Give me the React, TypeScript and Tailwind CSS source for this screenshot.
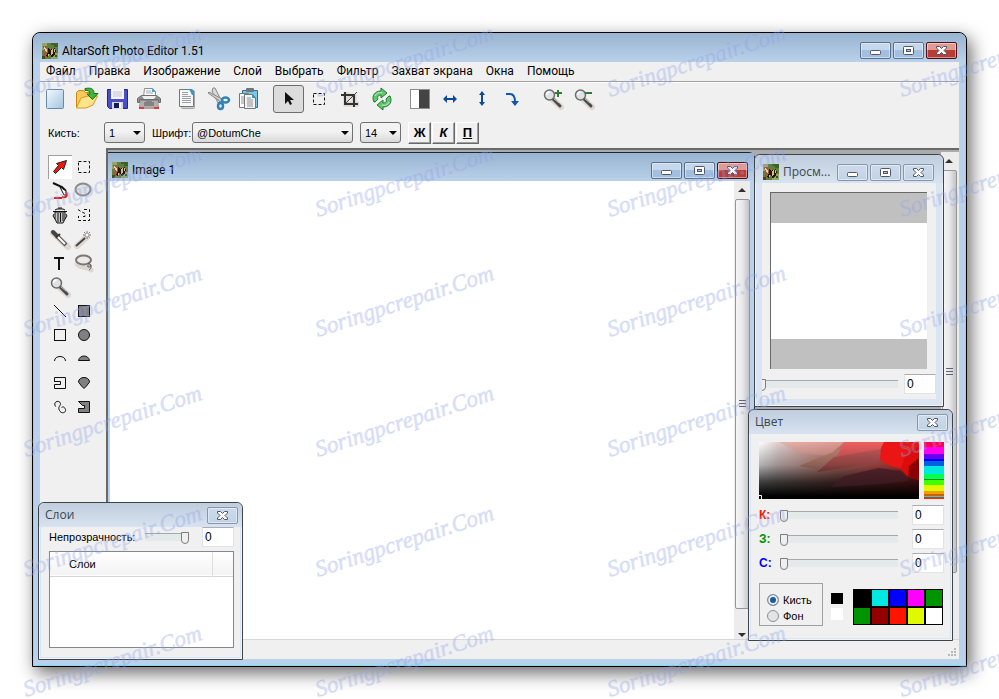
import { useState } from 'react';
import type { ReactNode } from 'react';

type IconProps = { children: ReactNode; size?: number };

function Icon({ children, size = 24 }: IconProps) {
  return (
    <svg width={size} height={size} viewBox={`0 0 ${size} ${size}`} fill="none" aria-hidden="true">
      {children}
    </svg>
  );
}

function Butterfly() {
  return (
    <svg width="16" height="16" viewBox="0 0 16 16" className="shrink-0" shapeRendering="crispEdges" aria-hidden="true">
      <rect width="16" height="16" fill="#5f7f3a" />
      <path d="M0 0h5v3H3v4H0zM11 10h5v6h-7v-3h2z" fill="#8fa868" />
      <path d="M9 0h7v4h-4V2H9z" fill="#3f6326" />
      <path d="M1 3h2l4 4v5l-3 3-2-3 1-3z" fill="#a4583a" />
      <path d="M2 4l3 2v3l-2-1z" fill="#e6cfb5" />
      <path d="M6 5l2 2 5-2 1 3-2 5-3 1-1-4-2 4-2-1 2-4z" fill="#23150f" />
      <path d="M9 7l2-1v4l-2 2zM12 6h1v3h-1zM6 11h1v2H6z" fill="#dcb98c" />
      <path d="M0 13h3v3H0zM13 12h2v2h-2z" fill="#394f20" />
    </svg>
  );
}

type CaptionKind = 'minimize' | 'maximize' | 'close';
type Tone = 'active' | 'danger' | 'idle';

const captionTones: Record<Tone, string> = {
  active: 'border-[#5b6f8c] bg-linear-to-b from-[#c3d7ed] from-45% to-[#a2bfdf] to-50%',
  danger: 'border-[#4d1018] bg-linear-to-b from-[#df9a92] from-45% to-[#b93d34] to-50%',
  idle: 'border-[#8796ab] bg-linear-to-b from-[#ccdbec] to-[#c2d3e6]',
};

function CaptionButton({ kind, tone, label }: { kind: CaptionKind; tone: Tone; label: string }) {
  return (
    <button
      type="button"
      aria-label={label}
      className={`flex h-[17px] w-[31px] items-center justify-center rounded-[2px] border shadow-[inset_0_0_0_1px_rgba(255,255,255,0.45)] ${captionTones[tone]}`}
    >
      <svg width="13" height="11" viewBox="0 0 13 11" aria-hidden="true">
        {kind === 'minimize' && <rect x="1.500" y="5.500" width="10" height="4" rx="1" fill="#fff" stroke="#535666" />}
        {kind === 'maximize' && (
          <>
            <rect x="1.500" y="1.500" width="10" height="8" rx="1" fill="#fff" stroke="#535666" />
            <rect x="4.500" y="4.500" width="4" height="2" fill="#a9c1de" stroke="#535666" />
          </>
        )}
        {kind === 'close' && (
          <path
            d="M1.500 1.500h3l2 2 2-2h3v1.500L9 5.500 11.500 8v1.500h-3l-2-2-2 2h-3V8L4 5.500 1.500 3z"
            fill="#fff"
            stroke="#535666"
          />
        )}
      </svg>
    </button>
  );
}

function WindowButtons({ tone }: { tone: 'active' | 'idle' }) {
  return (
    <div className="flex gap-0.5">
      <CaptionButton kind="minimize" tone={tone} label="Свернуть" />
      <CaptionButton kind="maximize" tone={tone} label="Развернуть" />
      <CaptionButton kind="close" tone={tone === 'active' ? 'danger' : 'idle'} label="Закрыть" />
    </div>
  );
}

function ScrollBar({ label }: { label: string }) {
  return (
    <div role="scrollbar" aria-label={label} aria-orientation="vertical" aria-valuenow={0} aria-controls="canvas" className="flex w-4 shrink-0 flex-col items-center bg-[#ececec]">
      <svg width="16" height="18" viewBox="0 0 16 18" aria-hidden="true">
        <path d="M4 11l4-4 4 4z" fill="#303030" />
      </svg>
      <div className="flex w-[15px] flex-1 items-center justify-center rounded-[2px] border border-[#979797] bg-linear-to-r from-[#f6f6f6] via-[#e8e8ea] to-[#c2c3c7]">
        <svg width="9" height="8" viewBox="0 0 9 8" shapeRendering="crispEdges" aria-hidden="true">
          <path d="M1 0h7v1H1zM1 3h7v1H1zM1 6h7v1H1z" fill="#5f6570" />
        </svg>
      </div>
      <svg width="16" height="30" viewBox="0 0 16 30" aria-hidden="true">
        <path d="M4 24l4 4 4-4z" fill="#303030" />
      </svg>
    </div>
  );
}

const menuItems = ['Файл', 'Правка', 'Изображение', 'Слой', 'Выбрать', 'Фильтр', 'Захват экрана', 'Окна', 'Помощь'];

const lens = (
  <>
    <path d="M12 13l8 7" stroke="#c9beb4" strokeWidth="6" strokeLinecap="round" opacity="0.5" />
    <path d="M12 12l7 7" stroke="#4c4a48" strokeWidth="3" strokeLinecap="round" />
    <path d="M13 12l5 4" stroke="#bdbdbd" strokeWidth="1" />
    <circle cx="8.500" cy="8" r="5" fill="#dfe2e4" stroke="#6c6c6c" strokeWidth="1.500" />
    <path d="M5.500 8a3 3 0 013-3" stroke="#fff" strokeWidth="1.500" />
  </>
);

const toolbarGroups: { name: string; art: ReactNode }[][] = [
  [
    {
      name: 'Создать',
      art: (
        <>
          <defs>
            <linearGradient id="sheet" x1="0" y1="0" x2="1" y2="1">
              <stop offset="0" stopColor="#f4f9fd" />
              <stop offset="1" stopColor="#a3c3e0" />
            </linearGradient>
          </defs>
          <rect x="2.500" y="2.500" width="17" height="19" rx="1" fill="url(#sheet)" stroke="#6589a9" />
        </>
      ),
    },
    {
      name: 'Открыть',
      art: (
        <>
          <path d="M1.500 20V5.500l2-2h5l2 2h7V10" fill="#f6c95a" stroke="#c98a12" />
          <path d="M1.500 21L6 11l7-2h9.500L18 18l-7 3z" fill="#ffe38a" stroke="#d79a1c" />
          <path d="M10 1.500c6-1 9 0 9 5h4l-5.500 6L12 7h3c0-3-2-4-5-3.500z" fill="#42b53a" stroke="#16741a" />
        </>
      ),
    },
    {
      name: 'Сохранить',
      art: (
        <>
          <path d="M1.500 2.500h20v19h-18l-2-2z" fill="#4a4fc4" stroke="#22278a" />
          <rect x="5" y="2" width="13" height="10" fill="#f4f4f6" />
          <path d="M7 5h9M7 7h9M7 9h9" stroke="#c4c4cc" />
          <rect x="6" y="15" width="11" height="7" fill="#d6d6ea" />
          <rect x="8" y="16" width="5" height="5" fill="#15195c" />
          <rect x="13" y="16" width="2" height="5" fill="#fff" />
        </>
      ),
    },
    {
      name: 'Печать',
      art: (
        <>
          <path d="M6.500 10.500l1-9h8l3 3v6" fill="#fff" stroke="#8c8c8c" />
          <path d="M9 4h5M9 6h7" stroke="#9aa5ad" />
          <path d="M15 1l4 4h-4z" fill="#45a9d8" />
          <path d="M.5 11.500l4-3h15l4 3v4h-2v-3h-19v3h-2z" fill="#8f8f8f" stroke="#6d6d6d" />
          <path d="M5 9h14l-2 3H7z" fill="#efefef" />
          <path d="M3.500 13.500h17l1 7h-19z" fill="#d6d6d6" stroke="#8a8a8a" />
          <path d="M4 15h16M4 17h16M3 19h18" stroke="#8a8a8a" />
          <path d="M8 19V15M10 19V14M12 19V14M14 19V14M16 19V15" stroke="#555" />
          <path d="M2 21h5M17 21h5" stroke="#e03a3a" strokeWidth="2" />
          <path d="M7 21h10" stroke="#b0a0a0" strokeWidth="2" />
        </>
      ),
    },
  ],
  [
    {
      name: 'Копировать',
      art: (
        <>
          <rect x="5.500" y="3.500" width="13" height="18" rx="1" fill="#cfcfcf" stroke="#a5a5a5" />
          <path d="M3.500 2.500H14l3.500 3v14h-14z" fill="#f7f7f7" stroke="#777" />
          <path d="M6 5.500h6M6 7.500h6M6 9.500h9M6 11.500h9M6 13.500h9M6 15.500h9" stroke="#9aa0a5" />
          <path d="M13 2h3l2 2v4h-2z" fill="#3697c8" />
        </>
      ),
    },
    {
      name: 'Вырезать',
      art: (
        <>
          <path d="M6 1h2l6 12-3 3L5 4z" fill="#d9d9d9" stroke="#888" />
          <path d="M1 6l1-1 13 7-1 3z" fill="#cdcdcd" stroke="#888" />
          <ellipse cx="18.500" cy="13" rx="3.500" ry="2.500" stroke="#2c83b8" strokeWidth="2.500" />
          <ellipse cx="13.500" cy="19" rx="2.500" ry="3" stroke="#2c83b8" strokeWidth="2.500" />
        </>
      ),
    },
    {
      name: 'Вставить',
      art: (
        <>
          <path d="M4.500 3.500h15v17h-15z" fill="#7cc5e4" stroke="#2b6f94" />
          <rect x="8" y="1" width="8" height="4" rx="1" fill="#69797f" />
          <path d="M1.500 6.500h9l2 2v12h-11z" fill="#fff" stroke="#777" />
          <path d="M6.500 7.500h8l3 3v11h-11z" fill="#f4f4f4" stroke="#777" />
          <path d="M14 7l4 4h-4z" fill="#3697c8" />
          <path d="M3 10h3M3 12h3M3 14h3M3 16h3M9 11h4M9 13h6M9 15h6M9 17h6M9 19h6" stroke="#8a9299" />
        </>
      ),
    },
  ],
  [
    { name: 'Указатель', art: <path d="M8 5v12l3-3 2 4 2-1-2-4h4z" fill="#111" /> },
    { name: 'Выделение', art: <rect x="5.500" y="6.500" width="11" height="11" stroke="#111" strokeDasharray="3 2" /> },
    {
      name: 'Кадрировать',
      art: (
        <>
          <path d="M7 5v12h13M4 9h11v11" stroke="#c3bdb8" strokeWidth="5" opacity="0.5" />
          <path d="M6 5v12h13M2 8h13v12" stroke="#333" strokeWidth="2" />
          <path d="M7 16L18 5" stroke="#444" />
        </>
      ),
    },
    {
      name: 'Обновить',
      art: (
        <>
          <path d="M4 15C1 9 5 4 11 4V1l6 5-6 5V8c-3 0-4 2-3 4l-3 3z" fill="#62c96b" stroke="#23763a" />
          <path d="M20 9c3 6-1 11-7 11v3l-6-5 6-5v3c3 0 4-2 3-4l3-3z" fill="#62c96b" stroke="#23763a" />
          <path d="M5 9c1-3 4-4 7-3M19 15c-1 3-4 4-7 3" stroke="#c5efc6" />
        </>
      ),
    },
  ],
  [
    {
      name: 'Контраст',
      art: (
        <>
          <rect x="1.500" y="2.500" width="19" height="19" fill="#fff" stroke="#8d8d8d" />
          <path d="M10 3h10v18H10z" fill="#444" />
        </>
      ),
    },
    {
      name: 'Отразить по горизонтали',
      art: (
        <>
          <path d="M5 12h10" stroke="#0a4a96" strokeWidth="2" />
          <path d="M3 12l4-4v8zM17 12l-4-4v8z" fill="#0a4a96" />
        </>
      ),
    },
    {
      name: 'Отразить по вертикали',
      art: (
        <>
          <path d="M11 7v9" stroke="#0a4a96" strokeWidth="2" />
          <path d="M11 4l3 4H8zM11 19l3-4H8z" fill="#0a4a96" />
        </>
      ),
    },
    {
      name: 'Повернуть',
      art: (
        <>
          <path d="M4 7h4c4 0 5 3 5 8" stroke="#0d55b0" strokeWidth="2" />
          <path d="M9 14h8l-4 5z" fill="#0d55b0" />
        </>
      ),
    },
  ],
  [
    {
      name: 'Увеличить',
      art: (
        <>
          {lens}
          <path d="M17 3v7M14 6h7" stroke="#2f7d32" strokeWidth="2" />
        </>
      ),
    },
    {
      name: 'Уменьшить',
      art: (
        <>
          {lens}
          <path d="M13 6h7" stroke="#2f7d32" strokeWidth="2" />
        </>
      ),
    },
  ],
];

const tools: ({ name: string; art: ReactNode } | null)[] = [
  { name: 'Перемещение', art: <path d="M18.500 5.500l-3 9-2-2-6 6-2-2 5-6-2-2z" fill="#f01808" stroke="#222" /> },
  { name: 'Прямоугольное выделение', art: <rect x="6.500" y="6.500" width="11" height="11" stroke="#111" strokeDasharray="3 2" /> },
  {
    name: 'Кисть',
    art: (
      <>
        <path d="M5 4l9 4 4 4" stroke="#111" strokeWidth="2" />
        <path d="M12 8l6 4v4h-2z" fill="#fff" stroke="#111" />
        <path d="M18 13c2 4 0 6-4 5M6 19h8" stroke="#e21a12" strokeWidth="2" />
      </>
    ),
  },
  { name: 'Овальное выделение', art: <ellipse cx="11" cy="10.500" rx="7.500" ry="6" fill="#e2e2e2" stroke="#8a8a8a" strokeWidth="2" /> },
  {
    name: 'Корзина',
    art: (
      <>
        <path d="M7 9h10v7l-2 4H9l-2-4z" fill="#c8c8c8" stroke="#111" />
        <path d="M5 8.500h14M7 7l2-1h6l2 1M10 5h4M6 11l-1 2 2 3M18 11l1 2-2 3M10 10v9M12.500 10v9M15 10v8" stroke="#111" />
      </>
    ),
  },
  {
    name: 'Выделение многоугольником',
    art: <path d="M12 6.500h5.500v11h-11V13M6 6.500l3 2 4 2v3H9" stroke="#111" strokeDasharray="3 2" />,
  },
  {
    name: 'Пипетка',
    art: (
      <>
        <path d="M5 6l15 14" stroke="#c9beb4" strokeWidth="6" strokeLinecap="round" opacity="0.5" />
        <path d="M5 5l4 4" stroke="#444" strokeWidth="4" strokeLinecap="round" />
        <path d="M12 7l-4 4" stroke="#333" strokeWidth="2" />
        <path d="M10 10l8 8" stroke="#555" strokeWidth="4" />
        <path d="M10 10l7 7" stroke="#fff" strokeWidth="2" />
      </>
    ),
  },
  {
    name: 'Волшебная палочка',
    art: (
      <>
        <path d="M5 19l10-9" stroke="#c9beb4" strokeWidth="6" strokeLinecap="round" opacity="0.5" />
        <path d="M4 19l9-8" stroke="#444" strokeWidth="2" />
        <path d="M15 4v9M11 8h9M12 5l6 6M18 5l-6 6" stroke="#7c7c7c" strokeDasharray="2 1" />
        <circle cx="15" cy="8" r="2" fill="#fff" stroke="#999" />
      </>
    ),
  },
  { name: 'Текст', art: <path d="M6 7h10M11 7v12" stroke="#111" strokeWidth="2" /> },
  {
    name: 'Лассо',
    art: (
      <>
        <path d="M5 13c5 5 11 2 14 6" stroke="#c9beb4" strokeWidth="5" strokeLinecap="round" opacity="0.5" />
        <ellipse cx="11.500" cy="9" rx="7.500" ry="4.500" fill="#eceae8" stroke="#777" strokeWidth="2" />
        <path d="M16 12c4 1 4 4 1 4s-1-3 1-2 1 4-1 5" stroke="#555" />
      </>
    ),
  },
  { name: 'Масштаб', art: lens },
  null,
  { name: 'Линия', art: <path d="M6 6l12 12" stroke="#111" /> },
  { name: 'Закрашенный прямоугольник', art: <rect x="6.500" y="6.500" width="11" height="11" fill="#808080" stroke="#111" /> },
  { name: 'Прямоугольник', art: <rect x="6.500" y="6.500" width="11" height="11" stroke="#111" /> },
  { name: 'Закрашенный круг', art: <circle cx="12" cy="12" r="5.500" fill="#808080" stroke="#111" /> },
  { name: 'Дуга', art: <path d="M6.500 14c0-6 11-6 11 0" stroke="#111" /> },
  { name: 'Сегмент', art: <path d="M6.500 13.500c1-6 10-6 11 0z" fill="#808080" stroke="#111" /> },
  { name: 'Ломаная', art: <path d="M6.500 11V6.500h11v11h-11v-4h6v-3h-6" stroke="#111" /> },
  { name: 'Сектор', art: <path d="M6.500 11c0-6 11-6 11 0l-3 4-2.500 2.500-2.500-2.500z" fill="#808080" stroke="#111" /> },
  { name: 'Кривая', art: <path d="M7.500 11.500c-3-5 4-7 5-3 0 3-3 3-1 7s7 2 6-1-3-3-4-2" stroke="#111" /> },
  { name: 'Многоугольник', art: <path d="M6.500 6.500h11v11h-11v-4h6v-3h-2z" fill="#808080" stroke="#111" /> },
];

function DropDown({ id, label, options, width }: { id: string; label?: string; options: string[]; width: string }) {
  return (
    <div className={`grid shrink-0 items-center ${width}`}>
      <select
        id={id}
        aria-label={label}
        className="col-start-1 row-start-1 h-[21px] appearance-none rounded-[3px] border border-[#707070] bg-linear-to-b from-[#f2f2f2] from-45% to-[#d9d9d9] pl-1 text-[11px] leading-4"
      >
        {options.map((option) => (
          <option key={option}>{option}</option>
        ))}
      </select>
      <svg width="8" height="4" viewBox="0 0 8 4" className="pointer-events-none col-start-1 row-start-1 mr-1 justify-self-end" aria-hidden="true">
        <path d="M0 0h8L4 4z" fill="#000" />
      </svg>
    </div>
  );
}

function Range({ label, value, className }: { label: string; value: number; className: string }) {
  return (
    <input
      type="range"
      aria-label={label}
      defaultValue={value}
      className={`h-3 appearance-none bg-transparent [&::-webkit-slider-runnable-track]:h-2 [&::-webkit-slider-runnable-track]:border-t [&::-webkit-slider-runnable-track]:border-[#a5a9a9] [&::-webkit-slider-runnable-track]:bg-[#e4e9e9] [&::-webkit-slider-thumb]:-mt-0.5 [&::-webkit-slider-thumb]:h-3 [&::-webkit-slider-thumb]:w-2 [&::-webkit-slider-thumb]:appearance-none [&::-webkit-slider-thumb]:rounded-b-sm [&::-webkit-slider-thumb]:border [&::-webkit-slider-thumb]:border-[#7d7d7d] [&::-webkit-slider-thumb]:bg-[#efefef] ${className}`}
    />
  );
}

function NumberBox({ label }: { label: string }) {
  return (
    <input
      type="text"
      aria-label={label}
      defaultValue="0"
      className="h-5 w-8 shrink-0 border border-[#e2e3ea] border-t-[#abadb3] bg-white px-0.5 text-[12px] leading-4"
    />
  );
}

const panelClass =
  'absolute flex flex-col rounded-t-md border border-[#3f444b] bg-[#d9e5f2] font-["Liberation_Sans",sans-serif] text-[11px] leading-4 shadow-[inset_0_0_0_1px_rgba(255,255,255,0.6)]';
const panelTitle = 'flex items-center justify-between rounded-t-md bg-linear-to-b from-[#bfcddd] to-[#d7e3f0] font-["Open_Sans",sans-serif] text-[12px] text-[#3c4650]';

function PreviewPanel() {
  return (
    <section className={`${panelClass} top-[121px] right-[22px] h-[253px] w-[190px]`}>
      <header className={`${panelTitle} h-7 shrink-0 pt-1.5 pr-[9px] pl-2`}>
        <div className="flex items-center gap-1">
          <Butterfly />
          <h2>Просм...</h2>
        </div>
        <WindowButtons tone="idle" />
      </header>
      <div className="mx-[7px] mb-[7px] flex flex-1 flex-col overflow-hidden bg-[#f0f0f0]">
        <div className="mt-[9px] mr-[9px] ml-2 flex h-[177px] flex-col justify-center border-t border-l border-[#696969] bg-[#c0c0c0]">
          <div className="h-[116px] bg-white" />
        </div>
        <div className="mt-[5px] flex items-center justify-between">
          <Range label="Масштаб просмотра" value={0} className="-ml-1 w-[140px]" />
          <NumberBox label="Масштаб" />
        </div>
      </div>
    </section>
  );
}

function ColorField() {
  return (
    <svg viewBox="0 0 160 57" preserveAspectRatio="none" className="h-[57px] flex-1" aria-hidden="true">
      <defs>
        <linearGradient id="grayFade" x1="0" x2="1">
          <stop offset="0" stopColor="#ffffff" />
          <stop offset="0.12" stopColor="#e0d0d0" />
          <stop offset="0.3" stopColor="#d8a49c" />
          <stop offset="0.5" stopColor="#c87870" />
          <stop offset="1" stopColor="#d83030" />
        </linearGradient>
        <linearGradient id="blackFade" x1="0" x2="0" y1="0" y2="1">
          <stop offset="0" stopColor="#000" stopOpacity="0" />
          <stop offset="0.4" stopColor="#000" stopOpacity="0.3" />
          <stop offset="0.7" stopColor="#000" stopOpacity="0.75" />
          <stop offset="0.95" stopColor="#000" />
        </linearGradient>
      </defs>
      <rect width="160" height="57" fill="url(#grayFade)" />
      <path d="M20 0h65L70 14 40 11z" fill="#e9aaa2" opacity="0.7" />
      <path d="M40 24L84 6 80 16 58 27z" fill="#c98a7a" />
      <path d="M86 0h41l-6 9-43 5z" fill="#ee6060" />
      <path d="M75 15l47-8-2 14-62 9z" fill="#c85c5c" />
      <rect width="160" height="57" fill="url(#blackFade)" />
      <path d="M85 34l35-8 22 3 8 10-28 3-50 3z" fill="#401c24" opacity="0.8" />
      <path d="M125 0h35v12l-14 16-14-4-11-6 1-12z" fill="#ea1515" />
      <path d="M146 14l14-10v34l-12-4-6-7z" fill="#dc0c0c" />
      <path d="M160 16v22l-11-4 1-10z" fill="#8d0000" />
      <path d="M0 55h160v2H0z" fill="#000" />
      <path d="M0 53.500h2.500V57" stroke="#fff" fill="none" />
    </svg>
  );
}

const hueStops: [string, string][] = [
  ['bg-[#ff0050]', 'h-[5px]'],
  ['bg-[#ff00f0]', 'h-[7px]'],
  ['bg-[#6a00f0]', 'h-[5px]'],
  ['bg-[#0000ff]', 'h-[2px]'],
  ['bg-[#0060e0]', 'h-[5px]'],
  ['bg-[#00e8e0]', 'h-[8px]'],
  ['bg-[#00ff50]', 'h-[5px]'],
  ['bg-[#0a9010]', 'h-[1px]'],
  ['bg-[#40ff00]', 'h-[5px]'],
  ['bg-[#e0f800]', 'h-[6px]'],
  ['bg-[#f0a000]', 'h-[3px]'],
  ['bg-[#c86400]', 'h-[2px]'],
  ['bg-[#00e8e0]', 'h-[1px]'],
  ['bg-[#ff2800]', 'h-[2px]'],
];

const channels = [
  { name: 'К', color: 'text-[#ff1400]' },
  { name: 'З', color: 'text-[#009400]' },
  { name: 'С', color: 'text-[#0000ff]' },
];

const swatches = [
  'bg-black',
  'bg-[#00e8e4]',
  'bg-[#0000ff]',
  'bg-[#ff00ff]',
  'bg-[#009400]',
  'bg-[#009400]',
  'bg-[#940000]',
  'bg-[#ff1400]',
  'bg-[#e0f800]',
  'bg-white',
];

function ColorPanel() {
  const [target, setTarget] = useState('Кисть');
  return (
    <section className={`${panelClass} top-[376px] right-[13px] h-[232px] w-[205px]`}>
      <header className={`${panelTitle} h-6 shrink-0 pr-1 pl-1.5`}>
        <h2>Цвет</h2>
        <CaptionButton kind="close" tone="idle" label="Закрыть палитру" />
      </header>
      <div className="mx-0.5 mb-0.5 flex flex-1 flex-col bg-[#f0f0f0] pt-2 pr-1.5 pl-2">
        <div className="flex gap-[5px]">
          <ColorField />
          <div className="w-5">
            {hueStops.map(([color, height], i) => (
              <div key={i} className={`${color} ${height}`} />
            ))}
          </div>
        </div>
        <div className="mt-1.5 flex flex-col gap-1">
          {channels.map(({ name, color }) => (
            <div key={name} className="flex items-center">
              <span className={`w-[21px] text-[12px] font-bold ${color}`}>{name}:</span>
              <Range label={name} value={0} className="mr-3.5 min-w-0 flex-1" />
              <NumberBox label={`Значение ${name}`} />
            </div>
          ))}
        </div>
        <div className="mt-2.5 flex items-center">
          <fieldset className="h-[43px] w-16 border border-[#a0a0a0] pt-2 pl-[7px]">
            {['Кисть', 'Фон'].map((name) => (
              <label key={name} className="flex h-4 items-center gap-1">
                <input
                  type="radio"
                  name="target"
                  checked={target === name}
                  onChange={() => setTarget(name)}
                  className="size-3 appearance-none rounded-full border border-[#8a8f94] bg-[#e4e4e4] checked:bg-[#1c5a9e] checked:shadow-[inset_0_0_0_2px_#e8eef4]"
                />
                {name}
              </label>
            ))}
          </fieldset>
          <div className="mt-1 ml-2 flex flex-col gap-1">
            <div className="h-[11px] w-3 bg-black" />
            <div className="h-3 w-3 bg-white" />
          </div>
          <div className="mt-1 ml-2.5 grid grid-cols-5 gap-0.5 border border-black bg-black">
            {swatches.map((color, i) => (
              <button key={i} type="button" aria-label={`Цвет ${i + 1}`} className={`size-4 ${color}`} />
            ))}
          </div>
        </div>
      </div>
    </section>
  );
}

function LayersPanel() {
  return (
    <section className={`${panelClass} bottom-[6px] left-[5px] h-[158px] w-[205px]`}>
      <header className={`${panelTitle} h-6 shrink-0 pr-1 pl-1.5`}>
        <h2>Слои</h2>
        <CaptionButton kind="close" tone="idle" label="Закрыть слои" />
      </header>
      <div className="mx-0.5 mb-0.5 flex flex-1 flex-col bg-[#f0f0f0] pr-1.5 pl-2">
        <div className="flex items-center justify-between">
          <span>Непрозрачность:</span>
          <Range label="Непрозрачность" value={100} className="mr-1 w-11" />
          <NumberBox label="Процент непрозрачности" />
        </div>
        <div className="mt-1 mb-[9px] flex-1 border border-[#828790] bg-white">
          <table className="w-full">
            <thead>
              <tr className="border-b border-[#d5d5d5] bg-linear-to-b from-white to-[#f3f3f3]">
                <th className="h-6 border-r border-[#dedede] pl-[19px] text-left font-normal">Слои</th>
                <th className="w-[21px]" aria-label="Видимость" />
              </tr>
            </thead>
          </table>
        </div>
      </div>
    </section>
  );
}

function Watermarks() {
  return (
    <svg className="pointer-events-none absolute inset-0 size-full" aria-hidden="true">
      {[97, 217, 337, 457, 577, 697].map((y) =>
        [26, 318, 610, 902].map((x) => (
          <text
            key={`${x}-${y}`}
            transform={`translate(${x} ${y}) rotate(-18)`}
            className='fill-[#7d90dc]/25 stroke-[#a4b4f0]/25 font-["Liberation_Serif",serif] text-[23px] italic'
          >
            Soringpcrepair.Com
          </text>
        )),
      )}
    </svg>
  );
}

export default function App() {
  return (
    <div className='relative flex min-h-screen overflow-hidden bg-white p-8 font-["Liberation_Sans",sans-serif] text-[11px] leading-4 text-black'>
      <main className="relative flex flex-1 flex-col rounded-t-lg border border-black bg-[#b9d1ea] shadow-[inset_0_0_0_1px_#7fdcf0,4px_6px_18px_rgba(0,0,0,0.6)]">
        <header className='flex h-[29px] shrink-0 items-center justify-between rounded-t-lg bg-linear-to-b from-[#99b4d1] to-[#b9d1ea] pt-1.5 pr-[9px] pl-[9px] font-["Roboto",sans-serif] text-[12px]'>
          <div className="flex items-center gap-1">
            <Butterfly />
            <h1>AltarSoft Photo Editor 1.51</h1>
          </div>
          <WindowButtons tone="active" />
        </header>
        <div className="mx-[7px] mb-[7px] flex flex-1 flex-col bg-[#f0f0f0]">
          <nav className='flex h-5 shrink-0 items-center gap-[13px] border-b border-[#a0a0a0] pb-0.5 pl-1.5 font-["Roboto",sans-serif] text-[12px]'>
            {menuItems.map((item) => (
              <button key={item} type="button">
                {item}
              </button>
            ))}
          </nav>
          <div className="flex h-8 shrink-0 items-center gap-2 border-t border-white">
            {toolbarGroups.map((group, i) => (
              <div key={i} className="flex">
                {group.map(({ name, art }) => (
                  <button
                    key={name}
                    type="button"
                    aria-label={name}
                    className={`flex h-7 w-[31px] items-center justify-center ${name === 'Указатель' ? 'rounded-[3px] border border-[#6d6d6d] bg-[#dcdcdc]' : ''}`}
                  >
                    <Icon>{art}</Icon>
                  </button>
                ))}
              </div>
            ))}
          </div>
          <div className="flex h-[34px] shrink-0 items-center pt-[3px] pl-2">
            <label htmlFor="brush" className="w-14">
              Кисть:
            </label>
            <DropDown id="brush" options={['1']} width="w-[41px]" />
            <label htmlFor="font" className="w-[47px] pl-[7px]">
              Шрифт:
            </label>
            <DropDown id="font" options={['@DotumChe']} width="w-[161px]" />
            <DropDown id="size" label="Размер шрифта" options={['14']} width="ml-[7px] w-[41px]" />
            <div className="ml-[7px] flex gap-px text-[13px] font-bold">
              {[
                ['Ж', ''],
                ['К', 'italic'],
                ['П', 'underline'],
              ].map(([letter, style]) => (
                <button
                  key={letter}
                  type="button"
                  className={`h-[22px] w-[23px] border border-t-white border-r-[#696969] border-b-[#696969] border-l-white shadow-[inset_-1px_-1px_0_#a0a0a0] ${style}`}
                >
                  {letter}
                </button>
              ))}
            </div>
          </div>

          <div className="flex flex-1">
            <aside className="w-[66px] shrink-0 pt-[7px] pl-2">
              <div className="grid w-12 grid-cols-2">
                {tools.map((tool, i) =>
                  tool ? (
                    <button
                      key={tool.name}
                      type="button"
                      aria-label={tool.name}
                      className={i === 0 ? 'size-6 bg-white shadow-[inset_1px_1px_0_#a0a0a0]' : 'size-6'}
                    >
                      <Icon>{tool.art}</Icon>
                    </button>
                  ) : (
                    <span key={i} />
                  ),
                )}
              </div>
            </aside>
            <div className="flex flex-1 border-t-2 border-l-2 border-[#696969] bg-[#ababab] pt-0.5">
              <section className="flex flex-1 flex-col rounded-tr-md border-t border-r border-[#1c2733] bg-[#b9d1ea]">
                <header className='flex h-7 shrink-0 items-center justify-between bg-linear-to-b from-[#99b4d1] to-[#b9d1ea] pt-1.5 pr-1.5 pl-1 font-["Roboto",sans-serif] text-[12px]'>
                  <div className="flex items-center gap-1">
                    <Butterfly />
                    <h2>Image 1</h2>
                  </div>
                  <WindowButtons tone="active" />
                </header>
                <div className="mr-1 ml-0.5 flex flex-1">
                  <div id="canvas" className="flex-1 bg-white" />
                  <ScrollBar label="Прокрутка изображения" />
                </div>
              </section>
              <div className="flex w-[204px] shrink-0 justify-end">
                <div className="flex bg-[#ececec] pr-0.5 pb-9">
                  <ScrollBar label="Прокрутка рабочей области" />
                </div>
              </div>
            </div>
          </div>

          <footer className="flex h-5 shrink-0 items-end justify-end border-t border-[#d8d8d8]">
            <svg width="12" height="12" viewBox="0 0 12 12" shapeRendering="crispEdges" aria-hidden="true">
              <path d="M7 1h2v2H7zM4 4h2v2H4zM7 4h2v2H7zM1 7h2v2H1zM4 7h2v2H4zM7 7h2v2H7z" fill="#b8b8b8" />
            </svg>
          </footer>
        </div>

        <PreviewPanel />
        <ColorPanel />
        <LayersPanel />
      </main>
      <Watermarks />
    </div>
  );
}
